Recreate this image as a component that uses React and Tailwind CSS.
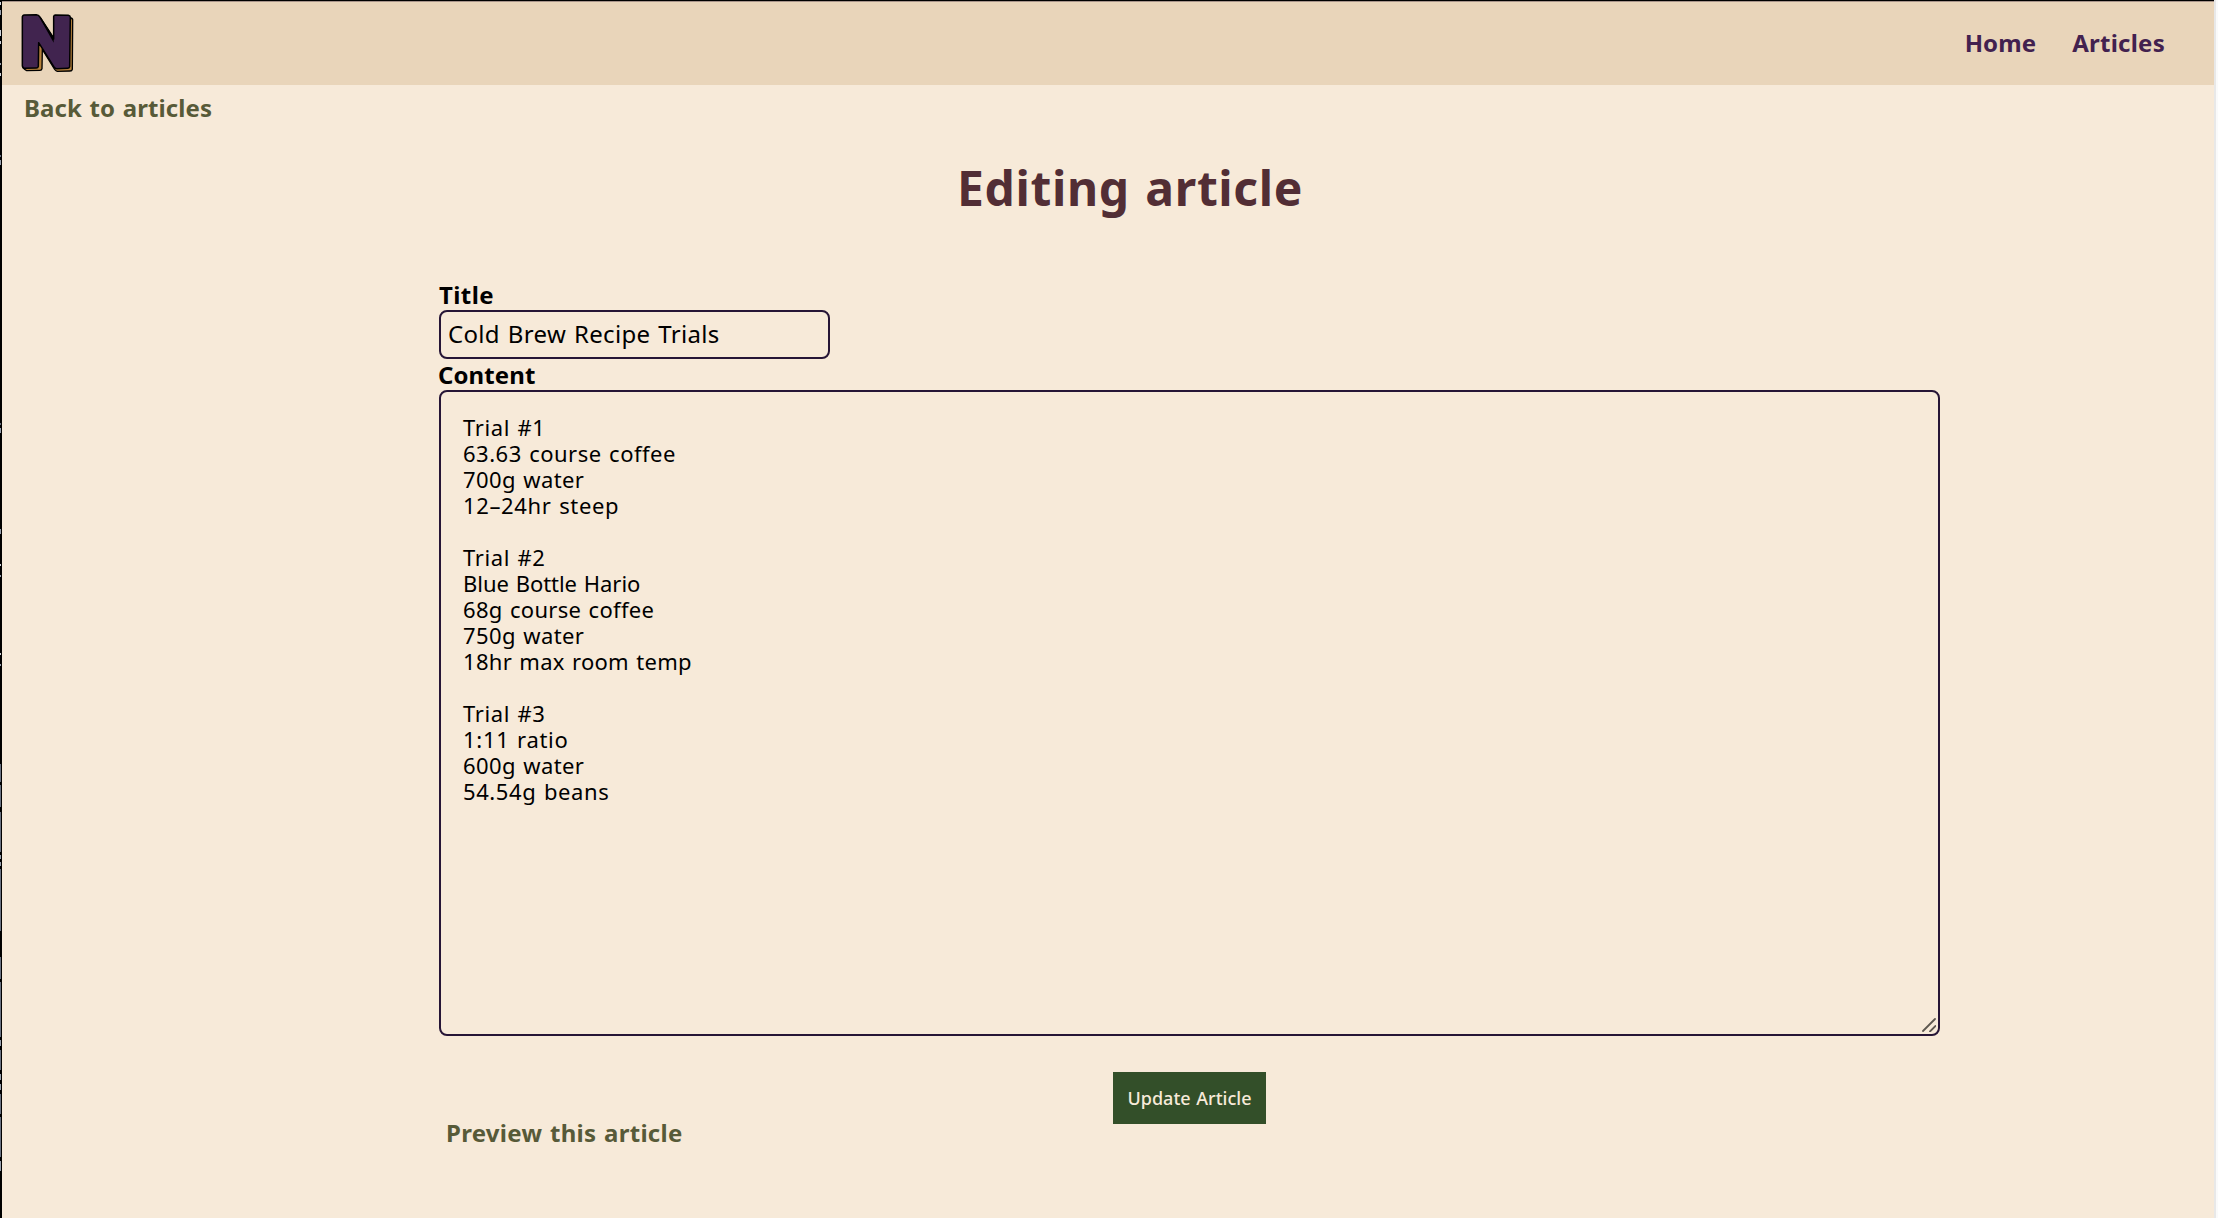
import React from "react";

const lines = [
  ["Trial #1", "tracking-[0.6px]"],
  ["63.63 course coffee", "tracking-[0.5px]"],
  ["700g water", "tracking-[0.4px]"],
  ["12–24hr steep", "tracking-[0.65px]"],
  ["", ""],
  ["Trial #2", "tracking-[0.6px]"],
  ["Blue Bottle Hario", "tracking-[-0.05px]"],
  ["68g course coffee", "tracking-[0.32px]"],
  ["750g water", "tracking-[0.4px]"],
  ["18hr max room temp", "tracking-[0.3px]"],
  ["", ""],
  ["Trial #3", "tracking-[0.6px]"],
  ["1:11 ratio", "tracking-[0.7px]"],
  ["600g water", "tracking-[0.4px]"],
  ["54.54g beans", "tracking-[0.6px]"],
];

function Logo() {
  return (
    <svg className="-mt-px h-[62px] w-[56px]" viewBox="60 36 168 186" aria-label="N" strokeLinejoin="round">
      <path
        d="M75 53 L122 54 L164 118 L166 53 L213 54 Q219 56 218 62 L217 208 Q216 213 210 213 L172 214 Q168 213 164 208 L127 148 L126 206 Q125 211 120 211 L80 212 Q77 211 69 203 Z"
        fill="#b5813a" stroke="#000" strokeWidth="4"
      />
      <path
        d="M72 45 L109 44 Q116 45 119 50 L161 117 L161 49 Q162 45 166 45 L205 46 Q211 47 211 52 L209 200 Q208 205 203 205 L170 206 Q165 205 162 201 L116 128 L115 199 Q114 204 109 204 L73 205 Q68 203 67 198 L67 50 Q68 46 72 45 Z"
        fill="#41244f" stroke="#000" strokeWidth="4.5"
      />
      <path d="M116 48 L161 114 L161 128 Z" fill="#000" />
    </svg>
  );
}

// Window edge: [gap, length, shade]
const edge = [
  [2, 3, "bg-gray-300"], [5, 5, "bg-gray-400"], [15, 6, "bg-gray-300"], [5, 3, "bg-gray-300"],
  [19, 2, "bg-gray-400"], [8, 3, "bg-gray-300"], [79, 2, "bg-gray-500"], [3, 5, "bg-gray-400"],
  [258, 2, "bg-gray-500"], [3, 5, "bg-gray-400"], [96, 5, "bg-gray-400"], [30, 2, "bg-gray-300"],
  [9, 2, "bg-gray-400"], [76, 2, "bg-gray-300"], [9, 2, "bg-gray-400"], [98, 18, "bg-gray-500"],
  [3, 22, "bg-gray-500"], [5, 40, "bg-gray-500"], [3, 4, "bg-gray-400"], [3, 4, "bg-gray-400"],
  [3, 62, "bg-gray-500"], [26, 22, "bg-gray-500"], [3, 55, "bg-gray-500"], [3, 6, "bg-gray-400"],
  [4, 20, "bg-gray-500"], [4, 6, "bg-gray-400"], [4, 6, "bg-gray-400"], [4, 20, "bg-gray-500"],
  [3, 40, "bg-gray-500"], [4, 10, "bg-gray-400"],
];

export default function App() {
  return (
    <div className="flex h-[1218px] w-[2218px] overflow-hidden bg-[#f7ead9] font-['Noto_Sans',sans-serif] text-black">
      <div className="flex w-[2px] shrink-0 flex-col overflow-hidden bg-black">
        {edge.map(([gap, len, shade], i) => (
          <div key={i} className={`w-px shrink-0 ${shade}`} style={{ marginTop: gap, height: len }} />
        ))}
      </div>

      <div className="flex min-w-0 flex-1 flex-col">
        <div className="h-px shrink-0 bg-black" />
        <div className="h-px shrink-0 bg-[#a8948a]" />
        <header className="flex h-[83px] shrink-0 items-center justify-between bg-[#e9d5ba] pr-[49px] pl-[18px]">
          <Logo />
          <nav className="flex gap-[36px] pb-[2px] text-2xl font-bold text-[#42214f]">
            <a className="tracking-[0.1px]">Home</a>
            <a className="tracking-[0.25px]">Articles</a>
          </nav>
        </header>

        <main className="flex flex-col">
          <a className="mt-2 ml-[22px] text-2xl leading-[30px] font-bold tracking-[0.09px] text-[#575a38] [word-spacing:1.3px]">
            Back to articles
          </a>
          <h1 className="mt-[35px] ml-[955px] text-5xl leading-[60px] font-bold tracking-[0.65px] text-[#522e35] [word-spacing:2.4px]">
            Editing article
          </h1>

          <form className="mt-[62px] ml-[437px] flex w-[1501px] flex-col">
            <label className="text-2xl leading-[30px] font-bold tracking-[0.4px]">Title</label>
            <input
              readOnly
              value="Cold Brew Recipe Trials"
              className="h-[49px] w-[391px] rounded-lg border-2 border-[#261536] bg-transparent px-[7px] pb-[2px] text-2xl tracking-[0.33px] outline-none [word-spacing:1.3px]"
            />
            <label className="-ml-px text-2xl leading-[31px] font-bold tracking-[0.1px]">Content</label>
            <div className="relative h-[646px] rounded-lg border-2 border-[#261536] px-[22px] pt-[22px] text-[22px] leading-[26px] [word-spacing:1.2px]">
              {lines.map(([text, tracking], i) => (
                <p key={i} className={`h-[26px] whitespace-pre ${tracking}`}>
                  {text}
                </p>
              ))}
              <svg className="absolute right-[2px] bottom-[2px] h-[14px] w-[14px]" viewBox="0 0 14 14" stroke="#5e5850" strokeWidth="1.8" strokeLinecap="round">
                <path d="M1 13 L13 1 M8 13.5 L13.5 8" />
              </svg>
            </div>
            <button
              type="button"
              className="mt-[36px] h-[52px] w-[153px] self-center bg-[#334f29] text-center text-lg font-medium tracking-normal text-[#f7ead9] [word-spacing:1px]"
            >
              Update Article
            </button>
            <a className="ml-[7px] text-2xl leading-[18px] font-bold tracking-[0.28px] text-[#575a38] [word-spacing:1.2px]">
              Preview this article
            </a>
          </form>
        </main>
      </div>

      <div className="w-[2px] shrink-0 bg-[#e8e8e8]" />
      <div className="w-[2px] shrink-0 bg-[#fafafa]" />
    </div>
  );
}
